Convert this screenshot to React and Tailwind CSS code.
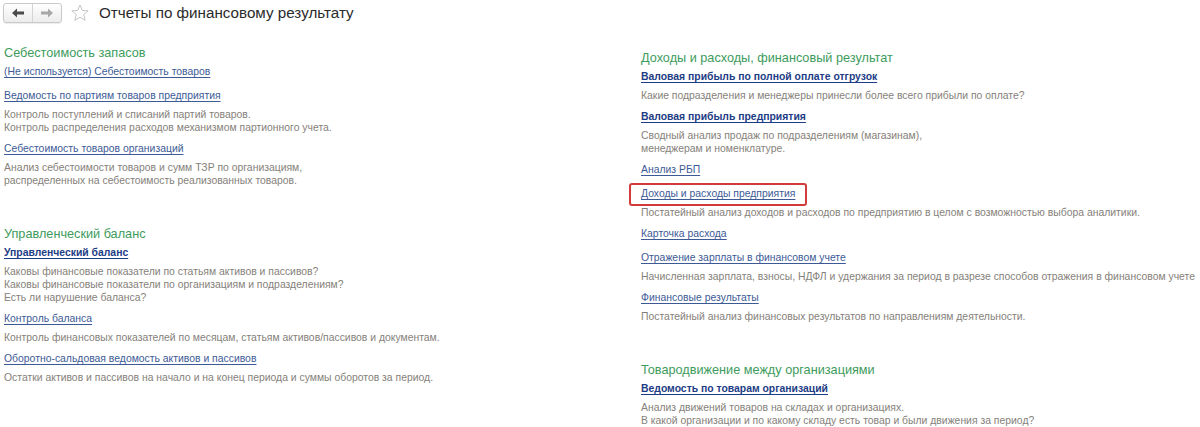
import React from "react";

const left = [
  {
    title: "Себестоимость запасов",
    items: [
      { link: "(Не используется) Себестоимость товаров" },
      {
        link: "Ведомость по партиям товаров предприятия",
        desc: [
          "Контроль поступлений и списаний партий товаров.",
          "Контроль распределения расходов механизмом партионного учета.",
        ],
      },
      {
        link: "Себестоимость товаров организаций",
        desc: [
          "Анализ себестоимости товаров и сумм ТЗР по организациям,",
          "распределенных на себестоимость реализованных товаров.",
        ],
      },
    ],
  },
  {
    title: "Управленческий баланс",
    items: [
      {
        link: "Управленческий баланс",
        bold: true,
        desc: [
          "Каковы финансовые показатели по статьям активов и пассивов?",
          "Каковы финансовые показатели по организациям и подразделениям?",
          "Есть ли нарушение баланса?",
        ],
      },
      {
        link: "Контроль баланса",
        desc: ["Контроль финансовых показателей по месяцам, статьям активов/пассивов и документам."],
      },
      {
        link: "Оборотно-сальдовая ведомость активов и пассивов",
        desc: ["Остатки активов и пассивов на начало и на конец периода и суммы оборотов за период."],
      },
    ],
  },
];

const right = [
  {
    title: "Доходы и расходы, финансовый результат",
    items: [
      {
        link: "Валовая прибыль по полной оплате отгрузок",
        bold: true,
        desc: ["Какие подразделения и менеджеры принесли более всего прибыли по оплате?"],
      },
      {
        link: "Валовая прибыль предприятия",
        bold: true,
        desc: [
          "Сводный анализ продаж по подразделениям (магазинам),",
          "менеджерам и номенклатуре.",
        ],
      },
      { link: "Анализ РБП" },
      {
        link: "Доходы и расходы предприятия",
        marked: true,
        desc: ["Постатейный анализ доходов и расходов по предприятию в целом с возможностью выбора аналитики."],
      },
      { link: "Карточка расхода" },
      {
        link: "Отражение зарплаты в финансовом учете",
        desc: [
          "Начисленная зарплата, взносы, НДФЛ и удержания за период в разрезе способов отражения в финансовом учете",
        ],
      },
      {
        link: "Финансовые результаты",
        desc: ["Постатейный анализ финансовых результатов по направлениям деятельности."],
      },
    ],
  },
  {
    title: "Товародвижение между организациями",
    items: [
      {
        link: "Ведомость по товарам организаций",
        bold: true,
        desc: [
          "Анализ движений товаров на складах и организациях.",
          "В какой организации и по какому складу есть товар и были движения за период?",
        ],
      },
    ],
  },
];

function Arrow({ dir, color }) {
  return (
    <svg width="12" height="10" viewBox="0 0 12 10" className={dir === "right" ? "rotate-180" : ""}>
      <path d="M0 5 L5 0.5 L5 3.5 L12 3.5 L12 6.5 L5 6.5 L5 9.5 Z" fill={color} />
    </svg>
  );
}

function Item({ item }) {
  const linkCls = item.bold
    ? "font-bold text-[#1d3c85]"
    : "text-[#3d5a96]";
  return (
    <div className="flex flex-col">
      <div className="h-[18px] leading-[18px]">
        <span className="relative inline-block">
          {item.marked && (
            <span className="absolute -left-[12px] -right-[12px] -top-[2px] -bottom-[3px] rounded-[3px] border-2 border-[#d13b3b]" />
          )}
          <a href="#" className={`underline underline-offset-2 decoration-1 ${linkCls}`}>
            {item.link}
          </a>
        </span>
      </div>
      {item.desc && (
        <div className="mt-[3px] text-[#85817a] whitespace-nowrap">
          {item.desc.map((d) => (
            <div key={d} className="leading-[13px]">
              {d}
            </div>
          ))}
        </div>
      )}
    </div>
  );
}

function Column({ groups, className }) {
  return (
    <div className={`flex flex-col gap-[37px] ${className}`}>
      {groups.map((g) => (
        <div key={g.title} className="flex flex-col">
          <div className="text-[12.7px] leading-[20px] text-[#3d9b5c]">{g.title}</div>
          <div className="flex flex-col gap-[6px]">
            {g.items.map((it) => (
              <Item key={it.link} item={it} />
            ))}
          </div>
        </div>
      ))}
    </div>
  );
}

export default function App() {
  return (
    <div
      className="w-[1200px] h-[427px] overflow-hidden bg-white text-[10.4px]"
      style={{ fontFamily: '"Liberation Sans", Arial, sans-serif' }}
    >
      <div className="flex items-center h-[25px] pl-[3px] pt-[1px]">
        <div className="flex h-[20px] w-[59px] rounded-[3px] border border-[#c9c9c9] bg-gradient-to-b from-white to-[#ececec] shadow-[0_1px_1px_rgba(0,0,0,0.08)]">
          <div className="flex flex-1 items-center justify-center border-r border-[#d4d4d4]">
            <Arrow dir="left" color="#4a4a4a" />
          </div>
          <div className="flex flex-1 items-center justify-center">
            <Arrow dir="right" color="#a8a8a8" />
          </div>
        </div>
        <svg width="20" height="20" viewBox="0 0 24 24" className="ml-[8px]">
          <path
            d="M12 2.5 L14.8 9 L21.8 9.4 L16.4 13.9 L18.2 20.8 L12 17 L5.8 20.8 L7.6 13.9 L2.2 9.4 L9.2 9 Z"
            fill="none"
            stroke="#c4c4c4"
            strokeWidth="1.2"
            strokeLinejoin="round"
          />
        </svg>
        <div className="ml-[9px] text-[15.2px] leading-[22px] text-[#2b2b2b]">
          Отчеты по финансовому результату
        </div>
      </div>
      <div className="grid grid-cols-[637px_1fr] pl-[4px]">
        <Column groups={left} className="pt-[18px]" />
        <Column groups={right} className="pt-[23px]" />
      </div>
    </div>
  );
}
